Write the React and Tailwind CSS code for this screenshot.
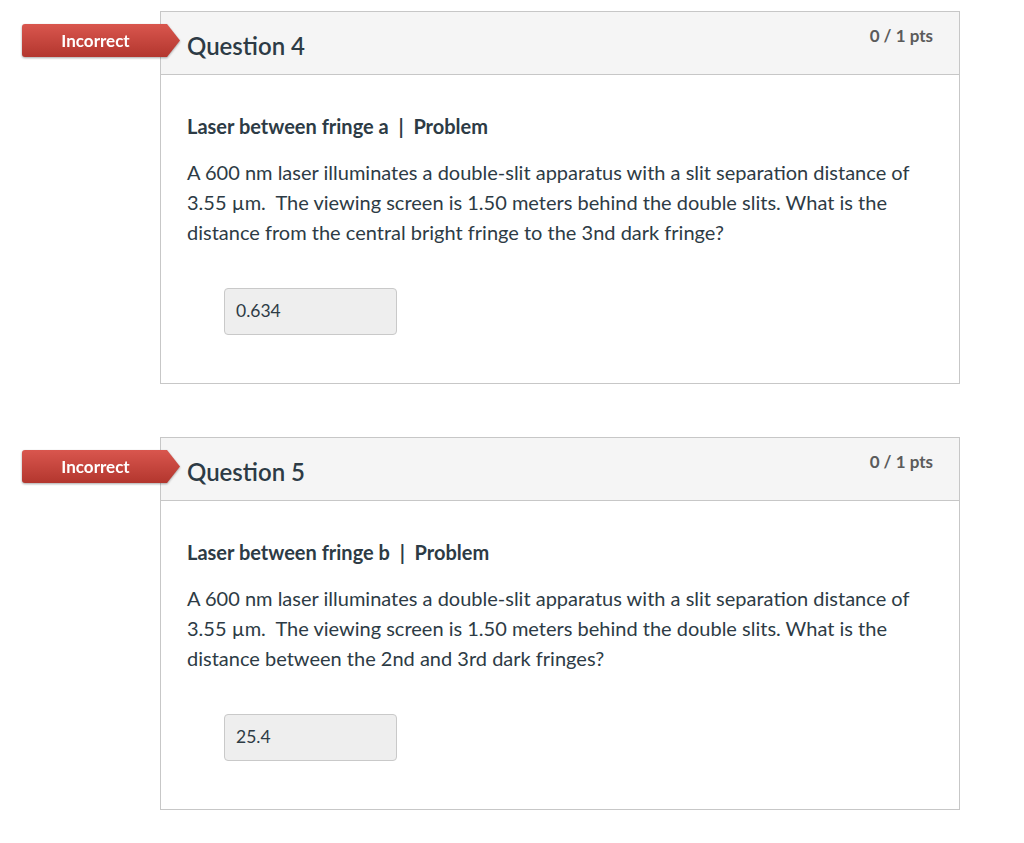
import React from "react";

const questions = [
  {
    num: 4,
    title: "Laser between fringe a",
    text: "A 600 nm laser illuminates a double-slit apparatus with a slit separation distance of 3.55 µm.  The viewing screen is 1.50 meters behind the double slits. What is the distance from the central bright fringe to the 3nd dark fringe?",
    answer: "0.634",
  },
  {
    num: 5,
    title: "Laser between fringe b",
    text: "A 600 nm laser illuminates a double-slit apparatus with a slit separation distance of 3.55 µm.  The viewing screen is 1.50 meters behind the double slits. What is the distance between the 2nd and 3rd dark fringes?",
    answer: "25.4",
  },
];

// red "Incorrect" flag hanging off the left of the card
const IncorrectBadge = () => (
  <div className="absolute left-[-139px] top-[12px] drop-shadow-[0_1px_1px_rgba(0,0,0,0.35)]">
    <div className="w-[158px] h-[33px] rounded-l-[3px] bg-linear-to-b from-[#d9564e] to-[#b3362e] [clip-path:polygon(0_0,145px_0,158px_50%,145px_100%,0_100%)] flex items-center">
      <span className="w-[145px] pl-[2px] text-center text-white text-[17px] font-bold leading-none">
        Incorrect
      </span>
    </div>
  </div>
);

const Question = ({ q }) => (
  <div className="relative ml-[160px] w-[800px] border border-[#c7c7c7] bg-white mb-[53px]">
    <IncorrectBadge />

    {/* Header */}
    <div className="h-[63px] bg-[#f5f5f5] border-b border-[#c7c7c7] flex justify-between">
      <h2 className="pl-[26px] pt-[19px] text-[24px] leading-[30px] font-semibold">
        Question {q.num}
      </h2>
      <div className="pr-[26px] pt-[14px] text-[17px] leading-[20px] font-bold text-[#5b5b5b]">
        0 / 1 pts
      </div>
    </div>

    {/* Body */}
    <div className="px-[26px] pt-[38px] pb-[48px]">
      <div className="text-[20px] leading-[27px] font-bold">
        {q.title} &nbsp;|&nbsp; Problem
      </div>
      <p className="mt-[17px] text-[20px] leading-[30px] whitespace-pre-wrap">
        {q.text}
      </p>
      <div className="mt-[41px] ml-[37px] w-[173px] h-[47px] rounded-[4px] border border-[#c9c9c9] bg-[#eeeeee] flex items-center pl-[11px] text-[17.5px]">
        {q.answer}
      </div>
    </div>
  </div>
);

export default function App() {
  return (
    <div className="min-h-screen bg-white pt-[11px] font-['Lato',sans-serif] text-[#2d3b45]">
      {questions.map((q) => (
        <Question key={q.num} q={q} />
      ))}
    </div>
  );
}
